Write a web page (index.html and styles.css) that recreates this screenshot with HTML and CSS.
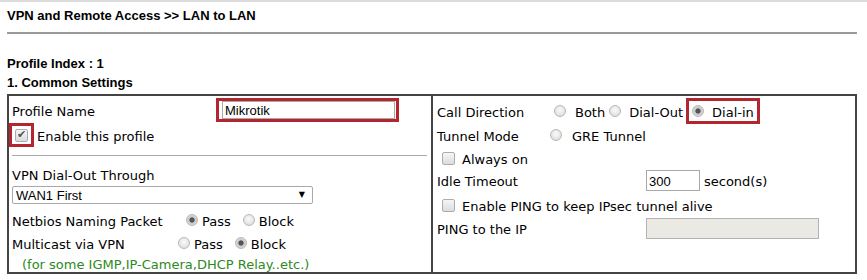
FILE: index.html
```html
<!DOCTYPE html>
<html lang="en">
<head>
	<meta charset="UTF-8">
	<title>LAN to LAN</title>
	<link rel="stylesheet" href="styles.css">
</head>
<body>
	<div class="page">
		<!-- 标题 -->
		<div class="title">VPN and Remote Access &gt;&gt; LAN to LAN</div>
		<div class="index">Profile Index : 1</div>
		<div class="section">1. Common Settings</div>
		<!-- 设置表格 -->
		<div class="box">
			<div class="cell left">
				<div class="row r-name">
					<span class="lab w-name">Profile Name</span>
					<span class="mark mark-input"><input type="text" class="txt name" value="Mikrotik"></span>
				</div>
				<div class="row r-enable">
					<span class="mark mark-check"><input type="checkbox" checked></span>
					<span class="lab after-mark">Enable this profile</span>
				</div>
				<div class="sep"></div>
				<div class="row r-dial">VPN Dial-Out Through</div>
				<div class="sel">
					<select><option>WAN1 First</option></select>
					<span class="arrow">&#9660;</span>
				</div>
				<div class="row r-netbios">
					<span class="lab w-netbios">Netbios Naming Packet</span>
					<label class="opt o-pass"><input type="radio" name="nb" checked><span class="lab">Pass</span></label>
					<label class="opt"><input type="radio" name="nb"><span class="lab">Block</span></label>
				</div>
				<div class="row r-multi">
					<span class="lab w-multi">Multicast via VPN</span>
					<label class="opt o-pass2"><input type="radio" name="mc"><span class="lab">Pass</span></label>
					<label class="opt"><input type="radio" name="mc" checked><span class="lab">Block</span></label>
				</div>
				<div class="row r-note">(for some IGMP,IP-Camera,DHCP Relay..etc.)</div>
			</div>
			<div class="cell right">
				<div class="row r-call">
					<span class="lab w-call">Call Direction</span>
					<label class="ropt o-both"><input type="radio" name="cd"><span class="lab">Both</span></label>
					<label class="ropt o-out"><input type="radio" name="cd"><span class="lab">Dial-Out</span></label>
					<span class="mark mark-radio"><label class="ropt"><input type="radio" name="cd" checked><span class="lab">Dial-in</span></label></span>
				</div>
				<div class="row r-tunnel">
					<span class="lab w-tunnel">Tunnel Mode</span>
					<label class="ropt o-gre"><input type="radio" name="tm"><span class="lab">GRE Tunnel</span></label>
				</div>
				<div class="row r-always">
					<label class="chk"><input type="checkbox"><span class="lab">Always on</span></label>
				</div>
				<div class="row r-idle">
					<span class="lab w-idle">Idle Timeout</span>
					<input type="text" class="txt idle" value="300">
					<span class="lab unit">second(s)</span>
				</div>
				<div class="row r-ping">
					<label class="chk"><input type="checkbox"><span class="lab">Enable PING to keep IPsec tunnel alive</span></label>
				</div>
				<div class="row r-ip">
					<span class="lab w-idle">PING to the IP</span>
					<input type="text" class="txt ip" disabled>
				</div>
			</div>
		</div>
	</div>
</body>
</html>
```
FILE: styles.css
```css
*{
	margin: 0;
	padding: 0;
	box-sizing: border-box;
}
body{
	background: #fff;
	color: #000;
	border-top: 2px solid #dcdcdc;
}
.page{
	padding: 6px 10px 0 7px;
	width: 867px;
}
/*标题*/
.title{
	font: bold 13px/16px "Liberation Sans", Arial, sans-serif;
	padding-bottom: 8px;
	border-bottom: 2px solid #9a9a9a;
}
.index,.section{
	font: bold 13px/16px "Liberation Sans", Arial, sans-serif;
}
.index{
	margin-top: 22px;
}
.section{
	margin-top: 3px;
	height: 19px;
}
/*表格外框*/
.box{
	display: grid;
	grid-template-columns: 424px 1fr;
	width: 850px;
	height: 180px;
	border: 2px solid #444;
	font: 13px "DejaVu Sans", Verdana, sans-serif;
}
.cell{
	display: flex;
	flex-direction: column;
	padding-top: 1px;
}
.left{
	border-right: 2px solid #444;
	padding-left: 3px;
}
.right{
	padding-left: 4px;
}
.row{
	display: flex;
	align-items: center;
	white-space: nowrap;
}
/*文字下移对齐*/
.lab{
	flex: none;
	padding-top: 2px;
}
/*红色标记框*/
.mark{
	border: 3px solid #b5252f;
	display: flex;
	align-items: center;
}
/*左侧*/
.r-name{
	margin-top: 1px;
	height: 24px;
}
.w-name{ width: 204px; }
.mark-input{
	padding: 0 1px 0 3px;
}
.txt{
	font: 13px "Liberation Sans", Arial, sans-serif;
	border: 1px solid #a9a9a9;
	padding: 1px 2px 0;
	color: #000;
	outline: none;
}
.name{
	width: 173px;
	height: 18px;
}
.r-enable{
	height: 26px;
}
.mark-check{
	margin-left: -3px;
	padding: 2px 3px;
	height: 24px;
}
.after-mark{
	margin-left: 3px;
}
.sep{
	margin: 7px 4px 0 0;
	border-top: 1px solid #aaa;
}
.r-dial{
	margin-top: 7px;
	height: 22px;
	padding-top: 2px;
}
.sel{
	position: relative;
	width: 301px;
	height: 18px;
	margin-top: 1px;
}
.sel select{
	appearance: none;
	width: 100%;
	height: 100%;
	border: 1px solid #a9a9a9;
	border-radius: 2px;
	background: #fff;
	font: 13px "Liberation Sans", Arial, sans-serif;
	padding: 1px 0 0 3px;
	color: #000;
}
.sel .arrow{
	position: absolute;
	right: 8px;
	top: 4px;
	font-size: 8px;
	pointer-events: none;
}
.r-netbios{
	margin-top: 4px;
	height: 24px;
}
.w-netbios{ width: 174px; }
.r-multi{
	height: 22px;
}
.w-multi{ width: 166px; }
.opt{
	display: flex;
	align-items: center;
}
.opt input{
	margin-right: 4px;
}
.o-pass{ margin-right: 12px; }
.o-pass2{ margin-right: 12px; }
.r-note{
	height: 17px;
	padding: 3px 0 0 10px;
	color: #2c8a22;
}
/*单选框*/
input[type=radio]{
	appearance: none;
	flex: none;
	width: 12px;
	height: 12px;
	border-radius: 50%;
	border: 1px solid #b8b8b8;
	background: radial-gradient(circle at 50% 40%, #fafafa 0, #e2e2e2 70%, #d4d4d4 100%);
}
input[type=radio]:checked{
	background: radial-gradient(circle, #555 0, #555 2.2px, #c9c9c9 3px, #e6e6e6 100%);
}
/*复选框*/
input[type=checkbox]{
	appearance: none;
	flex: none;
	position: relative;
	width: 13px;
	height: 13px;
	border-radius: 2px;
	border: 1px solid #adadad;
	background: linear-gradient(#f6f6f6, #dcdcdc);
}
input[type=checkbox]:checked::after{
	content: "\2714";
	position: absolute;
	left: 1px;
	top: -2px;
	font: 11px "DejaVu Sans", sans-serif;
	color: #555;
}
/*右侧*/
.r-call{
	margin-top: 1px;
	height: 26px;
}
.w-call{ width: 117px; }
.ropt{
	display: flex;
	align-items: center;
}
.ropt input{
	margin-right: 9px;
}
.o-both{ margin-right: 4px; }
.o-out input{ margin-right: 8px; }
.o-out{ margin-right: 3px; }
.mark-radio{
	height: 26px;
	padding: 0 3px 0 3px;
}
.mark-radio input{ margin-right: 8px; }
.r-tunnel{
	height: 22px;
}
.w-tunnel{ width: 113px; }
.o-gre input{ margin-right: 10px; }
.r-always{
	height: 24px;
}
.chk{
	display: flex;
	align-items: center;
	padding-left: 5px;
}
.chk input{
	margin-right: 7px;
}
.r-idle{
	height: 21px;
}
.w-idle{ width: 209px; }
.idle{
	width: 54px;
	height: 21px;
}
.unit{
	margin-left: 4px;
}
.r-ping{
	margin-top: 2px;
	height: 24px;
}
.r-ip{
	margin-top: 1px;
	height: 21px;
}
.ip{
	width: 173px;
	height: 21px;
	background: #ebe9e4;
	border-color: #b3b3b3;
}
```
